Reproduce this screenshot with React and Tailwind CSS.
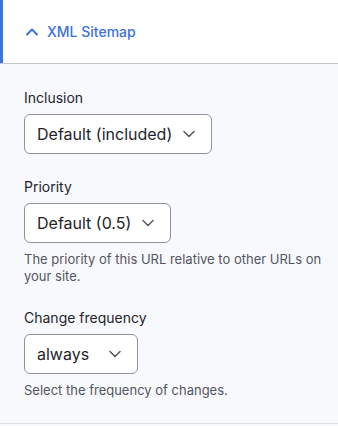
import { useState } from 'react';

// Small chevron used in the select boxes
function Chevron() {
  return (
    <svg width="12" height="8" viewBox="0 0 12 8" fill="none" className="absolute right-4 top-1/2 -translate-y-1/2">
      <path d="M1 1.5l5 5 5-5" stroke="#545560" strokeWidth="1.5" strokeLinecap="round" strokeLinejoin="round" />
    </svg>
  );
}

function SelectField({ label, value, width, description }) {
  return (
    <div className="flex flex-col items-start">
      <label className="text-[14px] leading-5 text-[#232429]">{label}</label>
      <div className={`relative mt-[6px] flex h-10 items-center rounded-[6px] border border-[#8e929c] bg-white pl-3 text-[16px] text-[#232429] ${width}`}>
        <span>{value}</span>
        <Chevron />
      </div>
      {description && (
        <p className="mt-2 text-[13px] leading-[17px] text-[#545560]">{description}</p>
      )}
    </div>
  );
}

export default function App() {
  const [open] = useState(true);

  const fields = [
    { label: 'Inclusion', value: 'Default (included)', width: 'w-[188px]' },
    {
      label: 'Priority',
      value: 'Default (0.5)',
      width: 'w-[147px]',
      description: 'The priority of this URL relative to other URLs on your site.',
    },
    {
      label: 'Change frequency',
      value: 'always',
      width: 'w-[114px]',
      description: 'Select the frequency of changes.',
    },
  ];

  return (
    <div className="w-[338px] h-[426px] bg-[#f8f9fd] font-['Inter',sans-serif]">
      {/* Details summary */}
      <div className="flex h-[64px] border-b border-[#c5c6cc] bg-white">
        <div className="w-[3px] bg-[#3a74e2]"></div>
        <div className="flex items-center gap-[9px] pl-[23px] text-[14px] font-medium text-[#3b72dc]">
          <svg width="12" height="8" viewBox="0 0 12 8" fill="none" className={open ? '' : 'rotate-180'}>
            <path d="M1 6.5l5-5 5 5" stroke="#3b72dc" strokeWidth="2" strokeLinecap="round" strokeLinejoin="round" />
          </svg>
          <span>XML Sitemap</span>
        </div>
      </div>

      {/* Details content */}
      <div className="flex flex-col gap-[23px] border-b border-[#dedfe4] pl-6 pr-3 pt-6 pb-6">
        {fields.map((field) => (
          <SelectField key={field.label} {...field} />
        ))}
      </div>
    </div>
  );
}
